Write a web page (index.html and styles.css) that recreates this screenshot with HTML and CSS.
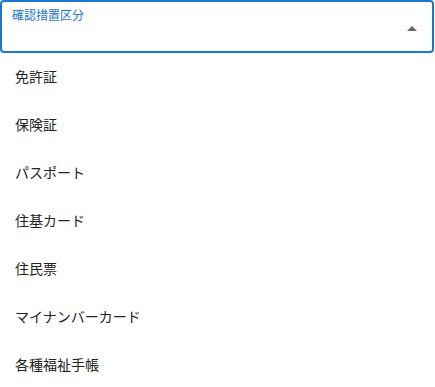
FILE: index.html
```html
<!DOCTYPE html>
<html lang="ja">
<head>
    <meta charset="UTF-8">
    <meta name="viewport" content="width=device-width, initial-scale=1.0">
    <title>確認措置区分</title>
    <link rel="stylesheet" href="styles.css">
</head>
<body>
    <div class="select-field">
        <div class="select-box">
            <span class="select-label">確認措置区分</span>
            <span class="select-arrow"></span>
        </div>
        <ul class="select-menu">
            <li>免許証</li>
            <li>保険証</li>
            <li>パスポート</li>
            <li>住基カード</li>
            <li>住民票</li>
            <li>マイナンバーカード</li>
            <li>各種福祉手帳</li>
        </ul>
    </div>
</body>
</html>
```

FILE: styles.css
```css
html, body {
    margin: 0;
    padding: 0;
    background-color: #fff;
    font-family: "Noto Sans CJK JP", "Noto Sans", sans-serif;
    color: #222;
}
.select-field {
    width: 435px;
}
.select-box {
    height: 53px;
    box-sizing: border-box;
    border: 2px solid #1976d2;
    border-radius: 4px;
    margin-right: 1px;
    padding: 5px 0 0 10px;
    display: flex;
    justify-content: space-between;
}
.select-label {
    font-size: 12px;
    line-height: 16px;
    color: #1976d2;
}
.select-arrow {
    width: 0;
    height: 0;
    margin: 19px 15px 0 0;
    border-left: 5px solid transparent;
    border-right: 5px solid transparent;
    border-bottom: 5px solid #666;
}
.select-menu {
    list-style: none;
    margin: 0;
    padding: 0;
}
.select-menu li {
    height: 48px;
    line-height: 46px;
    padding-left: 15px;
    font-size: 14px;
    color: #222;
}
```
